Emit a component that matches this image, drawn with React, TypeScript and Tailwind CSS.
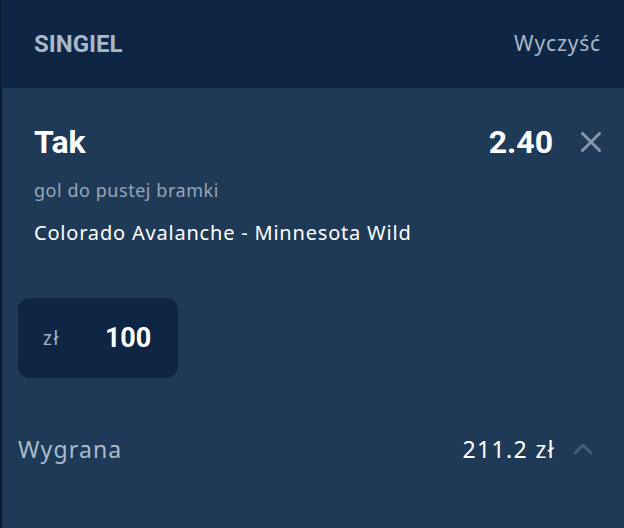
const sans = "font-['Noto_Sans',sans-serif]";
const roboto = "font-['Roboto',sans-serif]";

function CloseIcon() {
  return (
    <svg width="20" height="20" viewBox="0 0 20 20" fill="none" stroke="#8796a8" strokeWidth="3" strokeLinecap="round">
      <path d="M1.5 1.5 L18.5 18.5 M18.5 1.5 L1.5 18.5" />
    </svg>
  );
}

function Chevron() {
  return (
    <svg width="20" height="12" viewBox="0 0 20 12" fill="none" stroke="#4a6079" strokeWidth="2.5" strokeLinecap="round" strokeLinejoin="round">
      <path d="M2 10 L10 2 L18 10" />
    </svg>
  );
}

export default function App() {
  return (
    <div className="flex h-screen w-full bg-[#0b1d33]">
      <div className="ml-[2px] flex flex-1 flex-col">
        <header className="flex h-[88px] items-center justify-between bg-[#0e2643] pl-[32px] pr-[23px]">
          <h2 className={`${roboto} text-[24px] font-bold text-[#a9b8c9]`}>SINGIEL</h2>
          <button className={`${sans} text-[21px] tracking-[0.04em] text-[#a9b8c9]`}>Wyczyść</button>
        </header>

        <main className="flex flex-1 flex-col bg-[#1f3a56]">
          <section className="pl-[32px] pr-[23px] pt-[38px]">
            <div className="flex items-center justify-between">
              <span className={`${roboto} text-[32px] font-bold leading-none text-white`}>Tak</span>
              <div className="flex items-center gap-[28px]">
                <span className={`${roboto} text-[32px] font-bold leading-none text-white`}>2.40</span>
                <CloseIcon />
              </div>
            </div>
            <p className={`${sans} mt-[19px] text-[18px] tracking-[0.03em] text-[#95a7ba]`}>gol do pustej bramki</p>
            <p className={`${sans} mt-[14px] text-[20px] tracking-[0.04em] text-white`}>Colorado Avalanche - Minnesota Wild</p>
          </section>

          <div className="mt-[50px] px-[16px]">
            <div className="flex h-[80px] w-[160px] items-center rounded-[12px] bg-[#0e2643] pl-[25px]">
              <span className={`${sans} text-[19px] tracking-[0.08em] text-[#9fb3c8]`}>zł</span>
              <span className={`${roboto} ml-[45px] text-[27px] font-bold text-white`}>100</span>
            </div>
          </div>

          <div className="mt-[54px] flex items-center justify-between pl-[16px] pr-[31px]">
            <span className={`${sans} text-[23px] tracking-[0.05em] text-[#a9bccd]`}>Wygrana</span>
            <div className="flex items-center gap-[18px]">
              <span className={`${sans} text-[23px] tracking-[0.06em] text-white`}>211.2 zł</span>
              <Chevron />
            </div>
          </div>
        </main>
      </div>
    </div>
  );
}
